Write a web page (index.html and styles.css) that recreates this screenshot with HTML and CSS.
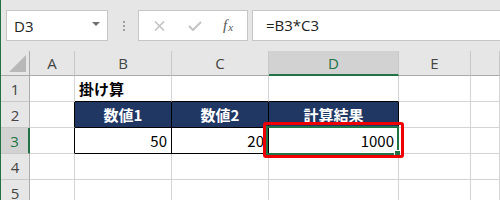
FILE: index.html
```html
<!DOCTYPE html>
<html>
<head>
  <title>掛け算</title>
  <link rel="stylesheet" href="styles.css">
</head>
<body>
  <div class="app">
    <div class="formula-bar">
      <div class="name-box">
        <span>D3</span>
        <span class="arrow"></span>
      </div>
      <div class="grip"><i></i><i></i><i></i></div>
      <div class="fx-box">
        <svg width="11" height="10" viewBox="0 0 11 10"><path d="M1 0.5 L10 9.5 M10 0.5 L1 9.5" stroke="#c3c3c3" stroke-width="1.6" fill="none"/></svg>
        <svg width="14" height="10" viewBox="0 0 14 10"><path d="M1 5 L5 9 L13 1" stroke="#c3c3c3" stroke-width="2" fill="none"/></svg>
        <span class="fx">f<span class="x">x</span></span>
      </div>
      <div class="formula">=B3*C3</div>
    </div>

    <div class="sheet">
      <div class="corner"><span class="tri"></span></div>
      <div class="hd">A</div>
      <div class="hd">B</div>
      <div class="hd">C</div>
      <div class="hd active">D</div>
      <div class="hd">E</div>
      <div class="hd"></div>

      <div class="rh">1</div>
      <div class="c"></div>
      <div class="c title top-edge">掛け算</div>
      <div class="c top-edge"></div>
      <div class="c top-edge"></div>
      <div class="c"></div>
      <div class="c"></div>

      <div class="rh">2</div>
      <div class="c left-edge"></div>
      <div class="c th">数値1</div>
      <div class="c th">数値2</div>
      <div class="c th">計算結果</div>
      <div class="c"></div>
      <div class="c"></div>

      <div class="rh active">3</div>
      <div class="c left-edge"></div>
      <div class="c td">50</div>
      <div class="c td">20</div>
      <div class="c td selected">1000<span class="sel"></span><span class="mark"></span></div>
      <div class="c"></div>
      <div class="c"></div>

      <div class="rh">4</div>
      <div class="c"></div>
      <div class="c"></div>
      <div class="c"></div>
      <div class="c"></div>
      <div class="c"></div>
      <div class="c"></div>

      <div class="rh">5</div>
      <div class="c"></div>
      <div class="c"></div>
      <div class="c"></div>
      <div class="c"></div>
      <div class="c"></div>
      <div class="c"></div>
    </div>
  </div>
</body>
</html>
```

FILE: styles.css
```css
/* シート画面 */

body {
  margin: 0;
  font-family: "Noto Sans CJK JP", sans-serif;
  background-color: #fff;
}

.app {
  width: 500px;
  height: 200px;
  overflow: hidden;
  border-left: 1px solid #217346;
  box-sizing: border-box;
}

/* 数式バー */

.formula-bar {
  display: flex;
  align-items: flex-start;
  height: 51px;
  padding-top: 10px;
  box-sizing: border-box;
  background-color: #e6e6e6;
}

.name-box {
  display: flex;
  align-items: center;
  justify-content: space-between;
  width: 102px;
  height: 31px;
  margin-left: 5px;
  padding: 0 7px 0 7px;
  box-sizing: border-box;
  background-color: #fff;
  border: 1px solid #c6c6c6;
  font-family: "Open Sans", sans-serif;
  font-size: 15px;
  color: #222;
}

.name-box .arrow {
  width: 0;
  height: 0;
  border-left: 4px solid transparent;
  border-right: 4px solid transparent;
  border-top: 4px solid #707070;
  margin-top: -4px;
}

.grip {
  display: flex;
  flex-direction: column;
  gap: 2px;
  width: 30px;
  height: 31px;
  align-items: center;
  justify-content: center;
  padding-left: 2px;
  box-sizing: border-box;
}

.grip i {
  width: 2px;
  height: 2px;
  background-color: #a0a0a0;
}

.fx-box {
  display: flex;
  align-items: center;
  width: 110px;
  height: 31px;
  padding-left: 15px;
  gap: 23px;
  box-sizing: border-box;
  background-color: #fff;
  border: 1px solid #c6c6c6;
}

.fx-box .fx {
  font-family: "Liberation Serif", serif;
  font-style: italic;
  font-size: 15px;
  color: #555;
  margin-left: -2px;
}

.fx-box .fx .x {
  font-size: 11px;
  margin-left: 1px;
  position: relative;
  top: 1px;
}

.formula {
  flex: 1;
  height: 31px;
  margin-left: 4px;
  margin-right: -4px;
  padding-left: 13px;
  box-sizing: border-box;
  background-color: #fff;
  border: 1px solid #c6c6c6;
  font-family: "Open Sans", sans-serif;
  font-size: 15px;
  line-height: 29px;
  color: #222;
}

/* シート */

.sheet {
  display: grid;
  grid-template-columns: 29px 45px 97px 97px 130px 72px 1fr;
  grid-template-rows: 25px repeat(5, 26px);
}

.sheet > div {
  display: flex;
  align-items: center;
  box-sizing: border-box;
  border-right: 1px solid #d4d4d4;
  border-bottom: 1px solid #d4d4d4;
  font-size: 15px;
  padding: 0 4px;
}

.corner {
  position: relative;
  background-color: #e6e6e6;
  border-right-color: #ababab !important;
  border-bottom-color: #ababab !important;
}

.corner .tri {
  position: absolute;
  right: 3px;
  bottom: 3px;
  width: 0;
  height: 0;
  border-left: 17px solid transparent;
  border-bottom: 17px solid #b8b8b8;
}

.hd {
  justify-content: center;
  background-color: #e6e6e6;
  border-right-color: #c8c8c8 !important;
  border-bottom-color: #ababab !important;
  font-family: "Open Sans", sans-serif;
  color: #444;
}

.hd.active {
  background-color: #d2d2d2;
  color: #217346;
  border-bottom: 2px solid #217346 !important;
}

.rh {
  justify-content: center;
  background-color: #e6e6e6;
  border-right-color: #ababab !important;
  border-bottom-color: #c8c8c8 !important;
  font-family: "Open Sans", sans-serif;
  color: #444;
}

.rh.active {
  background-color: #d2d2d2;
  color: #217346;
  border-right: 2px solid #217346 !important;
}

.title {
  font-weight: bold;
  color: #000;
}

.top-edge {
  border-bottom-color: #000 !important;
}

.left-edge {
  border-right-color: #000 !important;
}

.th {
  justify-content: center;
  background-color: #203764;
  color: #fff;
  font-weight: bold;
  border-right-color: #000 !important;
  border-bottom-color: #000 !important;
}

.td {
  justify-content: flex-end;
  color: #000;
  border-right-color: #000 !important;
  border-bottom-color: #000 !important;
}

.selected {
  position: relative;
}

.selected .sel {
  position: absolute;
  top: -2px;
  left: -3px;
  right: -1px;
  bottom: -2px;
  border: 2px solid #217346;
  z-index: 1;
}

.selected .sel::after {
  content: "";
  position: absolute;
  right: -3px;
  bottom: -3px;
  width: 5px;
  height: 5px;
  background-color: #217346;
  border-left: 1px solid #fff;
  border-top: 1px solid #fff;
}

.selected .mark {
  position: absolute;
  top: -6px;
  left: -6px;
  right: -6px;
  bottom: -5px;
  border: 3px solid #ee0000;
  border-radius: 3px;
  z-index: 2;
}
```
